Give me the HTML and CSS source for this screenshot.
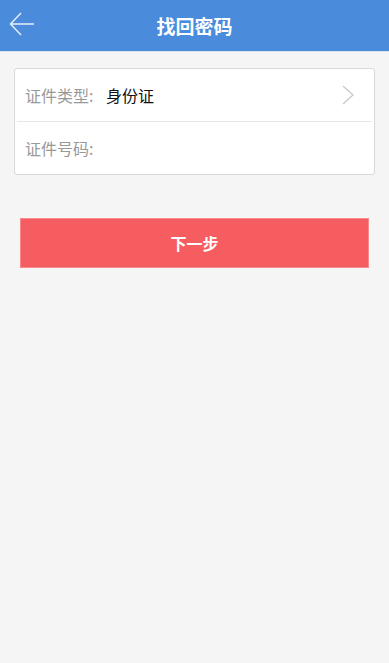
FILE: index.html
```html
<!DOCTYPE html>
<html lang="zh-CN">
<head>
  <meta charset="UTF-8" />
  <meta name="viewport" content="width=device-width, initial-scale=1.0"/>
  <title>找回密码</title>
  <link rel="stylesheet" href="styles.css">
</head>
<body>

  <header class="topbar">
    <a class="voltar" href="#">
      <svg width="26" height="24" viewBox="0 0 26 24">
        <path d="M25 12 H2 M12 1 L1.5 12 L12 23" fill="none" stroke="#e8f0fb" stroke-width="1.4"/>
      </svg>
    </a>
    <h1>找回密码</h1>
  </header>

  <div class="cartao">
    <div class="linha">
      <span class="rotulo">证件类型:</span>
      <span class="valor">身份证</span>
      <svg class="seta" width="12" height="20" viewBox="0 0 12 20">
        <path d="M1 1 L11 10 L1 19" fill="none" stroke="#c8c8c8" stroke-width="1.3"/>
      </svg>
    </div>
    <div class="linha">
      <span class="rotulo">证件号码:</span>
      <input class="campo" type="text">
    </div>
  </div>

  <button class="btnProximo">下一步</button>

</body>
</html>
```

FILE: styles.css
```css
body {
  font-family: "Noto Sans CJK SC", "Noto Sans", sans-serif;
  margin: 0;
  background-color: #f5f5f5;
  min-height: 663px;
}

.topbar {
  height: 51px;
  background-color: #4a8bdc;
  display: flex;
  align-items: center;
  justify-content: center;
  position: relative;
  border-bottom: 1px solid #d9e2ee;
}

.topbar h1 {
  margin: 0;
  color: white;
  font-size: 19px;
  font-weight: bold;
}

.voltar {
  position: absolute;
  left: 9px;
  top: 12px;
  display: flex;
}

.cartao {
  margin: 16px 14px 0 14px;
  background: white;
  border: 1px solid #d8d8d8;
  border-radius: 3px;
  padding: 0 2px;
}

.linha {
  height: 52px;
  display: flex;
  align-items: center;
  padding: 0 8px;
  font-size: 16px;
}

.linha + .linha {
  border-top: 1px solid #e6e6e6;
}

.rotulo {
  color: #999;
  width: 81px;
}

.valor {
  color: #111;
  flex: 1;
}

.seta {
  margin-right: 10px;
}

.campo {
  flex: 1;
  border: none;
  outline: none;
  font-size: 16px;
  background: transparent;
}

.btnProximo {
  display: block;
  margin: 43px 20px 0 20px;
  width: 349px;
  height: 50px;
  border: 1px solid #f88a8c;
  background-color: #f65d60;
  color: white;
  font-family: "Noto Sans CJK SC", sans-serif;
  font-size: 16px;
  font-weight: bold;
  cursor: pointer;
}
```
